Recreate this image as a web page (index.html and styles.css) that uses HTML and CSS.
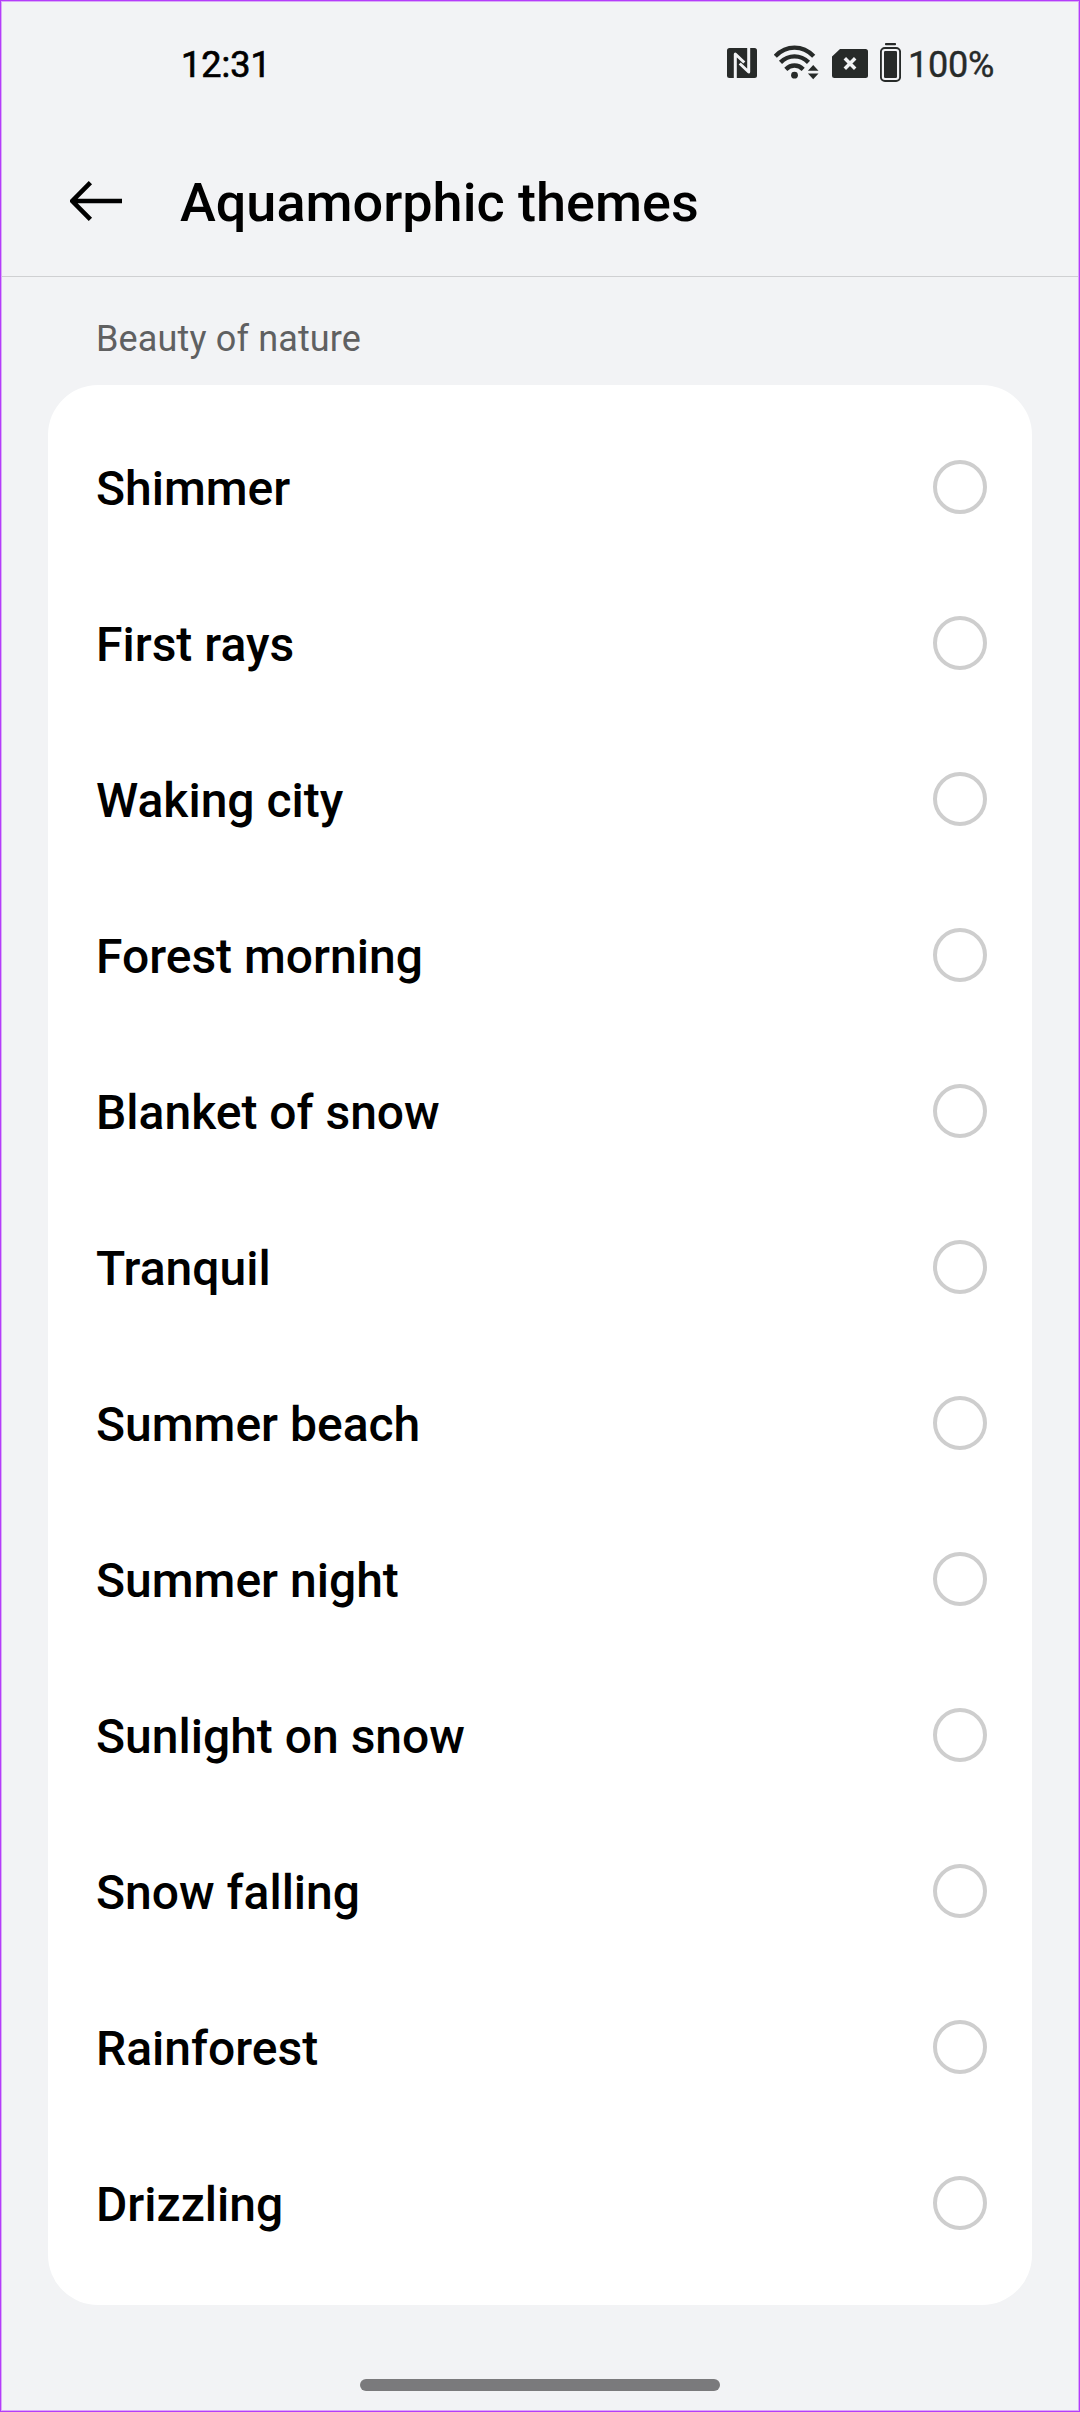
FILE: index.html
```html
<!DOCTYPE html>
<html lang="en">
<head>
<meta charset="utf-8">
<title>Aquamorphic themes</title>
<link rel="stylesheet" href="styles.css">
</head>
<body>
<div class="screen">
  <div class="status">
    <span class="time">12:31</span>
    <div class="indicators">
      <svg class="nfc" width="30" height="40" viewBox="727 43 30 40">
        <rect x="727" y="48" width="30" height="30" rx="2.5" fill="#272a29"/>
        <path d="M735.300 78V54L744.300 62.500M748.700 48V72L739.700 63.500" fill="none" stroke="#f2f3f5" stroke-width="3" stroke-linejoin="round"/>
      </svg>
      <svg class="wifi" width="45" height="40" viewBox="774 43 45 40" fill="none" stroke="#272a29" stroke-width="4.4">
        <path d="M775.3 56.2C786.5 44.8 802.5 44.8 813.7 56.2"/>
        <path d="M780.5 62.4C788.5 54.4 800.5 54.4 808.5 62.4"/>
        <path d="M785.8 69.3C791 64.3 798 64.3 803.2 69.3"/>
        <circle cx="794.5" cy="75.2" r="3.4" fill="#272a29" stroke="none"/>
        <path d="M813.2 65l5.3 5.8h-10.6zM813.2 79.2l5.3-5.8h-10.6z" fill="#272a29" stroke="none"/>
      </svg>
      <svg class="sim" width="36" height="40" viewBox="832 43 36 40">
        <path d="M840 49h25.500a2.500 2.500 0 0 1 2.500 2.500v24a2.500 2.500 0 0 1-2.500 2.500h-31a2.500 2.500 0 0 1-2.500-2.500V56.500z" fill="#272a29"/>
        <path d="M844.8 58.300l10.400 10.400M855.200 58.300l-10.400 10.400" stroke="#f2f3f5" stroke-width="3.500"/>
      </svg>
      <svg class="battery" width="21" height="40" viewBox="880 43 21 40">
        <rect x="885" y="43" width="11" height="2.300" rx=".8" fill="#272a29"/>
        <rect x="880.900" y="48" width="19.200" height="33" rx="4" fill="none" stroke="#272a29" stroke-width="1.900"/>
        <rect x="884" y="51" width="13" height="27" rx="1.300" fill="#272a29"/>
      </svg>
      <span class="percent">100%</span>
    </div>
  </div>
  <header class="header">
    <svg class="back" width="53" height="40" viewBox="70 181 53 40" fill="none" stroke="#000" stroke-width="4.600">
      <path d="M122 201H73M90.400 182.700L72.300 201l18.100 18.300"/>
    </svg>
    <h1 class="title">Aquamorphic themes</h1>
  </header>
  <main>
    <h2 class="section">Beauty of nature</h2>
    <ul class="card">
      <li class="row"><span class="label">Shimmer</span><span class="radio"></span></li>
      <li class="row"><span class="label">First rays</span><span class="radio"></span></li>
      <li class="row"><span class="label">Waking city</span><span class="radio"></span></li>
      <li class="row"><span class="label">Forest morning</span><span class="radio"></span></li>
      <li class="row"><span class="label">Blanket of snow</span><span class="radio"></span></li>
      <li class="row"><span class="label">Tranquil</span><span class="radio"></span></li>
      <li class="row"><span class="label">Summer beach</span><span class="radio"></span></li>
      <li class="row"><span class="label">Summer night</span><span class="radio"></span></li>
      <li class="row"><span class="label">Sunlight on snow</span><span class="radio"></span></li>
      <li class="row"><span class="label">Snow falling</span><span class="radio"></span></li>
      <li class="row"><span class="label">Rainforest</span><span class="radio"></span></li>
      <li class="row"><span class="label">Drizzling</span><span class="radio"></span></li>
    </ul>
  </main>
  <div class="home"></div>
</div>
</body>
</html>
```
FILE: styles.css
```css
* { box-sizing: border-box; }
body { margin: 0; font-family: Roboto, sans-serif; color: #000; }
.screen {
  position: relative;
  width: 1080px;
  height: 2412px;
  background: #f2f3f5;
  display: flex;
  flex-direction: column;
}
/* two-tone frame drawn over the edges */
.screen::after {
  content: "";
  position: absolute;
  inset: 0;
  border: 1px solid #b43cfa;
  box-shadow: inset 0 0 0 1px #dba9f8;
  pointer-events: none;
}
.status {
  height: 129px;
  display: flex;
  justify-content: space-between;
  align-items: center;
  padding: 0 86px 0 181px;
  line-height: 42px;
}
.time { font-size: 36px; -webkit-text-stroke: 0.7px #000; }
.indicators { display: flex; align-items: center; color: #272a29; }
.indicators svg { margin-bottom: 3px; }
.indicators .wifi { margin-left: 17px; }
.indicators .sim { margin-left: 13px; }
.indicators .battery { margin-left: 12px; }
.percent { width: 93px; font-size: 36px; letter-spacing: -0.2px; -webkit-text-stroke: 0.4px #272a29; white-space: nowrap; padding-left: 7px; }
.header {
  height: 148px;
  display: flex;
  align-items: center;
  padding: 0 70px;
  border-bottom: 1px solid #cfd0d2;
}
.back { margin-bottom: 3px; }
.title { margin: 0 0 0 57px; font-size: 54px; font-weight: 500; line-height: 64px; }
.section {
  margin: 0;
  height: 108px;
  padding: 41px 96px 0;
  font-size: 36px;
  font-weight: 400;
  line-height: 42px;
  letter-spacing: 0.15px;
  color: #5f6061;
}
.card {
  list-style: none;
  margin: 0 48px;
  padding: 24px 45px 24px 48px;
  background: #fff;
  border-radius: 50px;
}
.row { height: 156px; display: flex; align-items: center; justify-content: space-between; }
.label { font-size: 48px; font-weight: 500; line-height: 56px; padding-top: 3px; }
.radio { width: 54px; height: 54px; border: 4px solid #cecece; border-radius: 50%; }
.home { width: 360px; height: 12px; border-radius: 6px; background: #7a7a7c; margin: 74px auto 0; }
```
